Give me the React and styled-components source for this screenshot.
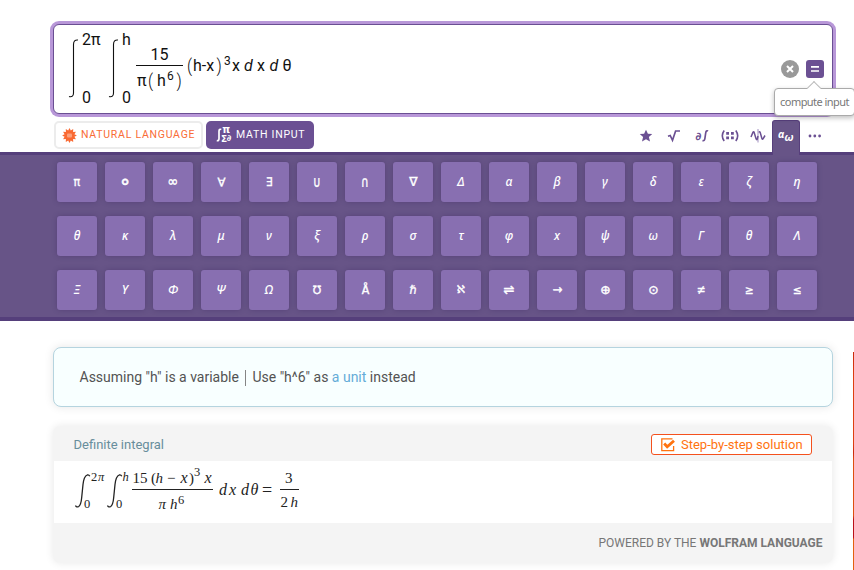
import React from "react";
import styled, { createGlobalStyle, css } from "styled-components";

const Global = createGlobalStyle`
  *, *::before, *::after { box-sizing: border-box; }
  body { margin: 0; background: #fff; font-family: Roboto, "Liberation Sans", sans-serif; }
`;

const Page = styled.main`
  display: grid;
  grid-template-columns: 853px 1px;
  width: 854px;
  height: 570px;
  overflow: hidden;
  background: #fff;
`;

const Column = styled.div`
  display: flex;
  flex-direction: column;
  width: 854px;
  padding-top: 24px;
`;

const EdgeBanner = styled.aside`
  height: 218px;
  margin-top: 352px;
  background: linear-gradient(#c9290c, #dd3f10 12%, #dd3f10 42%, #c9290c 46%, #dd4f10 50%, #dd4f10 75%, #b91018 77%, #b91018 85%, #e2600f 86%, #e2600f);
`;

const InputBox = styled.section`
  display: flex;
  justify-content: space-between;
  width: 780px;
  height: 90px;
  margin-left: 53px;
  flex: none;
  border: 1px solid #6a4f93;
  border-radius: 6px;
  box-shadow: 0 0 0 3px #b897d8;
  background: #fff;
`;

const Editor = styled.div`
  display: flex;
  align-items: flex-start;
  padding: 5px 0 0 14px;
  color: #111;
  font-size: 16px;
  line-height: 20px;
`;

const Integral = styled.div`
  display: flex;
  gap: 2px;
  width: ${(p) => p.$w}px;
`;

const Limits = styled.div`
  display: flex;
  flex-direction: column;
  justify-content: space-between;
  height: 78px;
`;

const Fraction = styled.div`
  display: flex;
  flex-direction: column;
  width: 47px;
  margin: 15px 4px 0 0;
`;

const Numerator = styled.div`
  height: 21px;
  border-bottom: 1px solid #111;
  text-align: center;
`;

const Denominator = styled.div`
  display: flex;
  padding: 5px 0 0 1px;
`;

const Terms = styled.div`
  display: flex;
  margin-top: 26px;
`;

const Term = styled.span`
  width: ${(p) => p.$w}px;
  flex: none;
  white-space: pre;
  ${(p) => p.$italic && css`font-style: italic;`}
  ${(p) => p.$sup && css`font-size: 12px; transform: translateY(-5px);`}
  ${(p) => p.$tall && css`transform: scaleY(1.1); font-weight: 300;`}
`;

const Actions = styled.div`
  position: relative;
  display: flex;
  align-items: center;
  gap: 7px;
  height: 20px;
  margin: 34px 8px 0 0;
`;

const Action = styled.button`
  display: grid;
  place-items: center;
  width: 18px;
  height: 18px;
  padding: 0;
  border: 0;
  border-radius: ${(p) => (p.$round ? "50%" : "3px")};
  background: ${(p) => (p.$round ? "#999" : "#6b5093")};
`;

const Tooltip = styled.div`
  position: absolute;
  top: 29px;
  left: -7px;
  z-index: 3;
  width: 81px;
  height: 28px;
  border: 1px solid #aaa;
  border-radius: 4px;
  background: #fff;
  box-shadow: 0 2px 5px rgba(0, 0, 0, 0.25);
  color: #777;
  font-family: "Noto Sans", sans-serif;
  font-size: 11px;
  letter-spacing: -0.55px;
  line-height: 26px;
  text-align: center;
  white-space: nowrap;

  &::before {
    content: "";
    position: absolute;
    top: -6px;
    left: 34px;
    width: 10px;
    height: 10px;
    border: solid #bbb;
    border-width: 1px 0 0 1px;
    background: #fff;
    transform: rotate(45deg);
  }
`;

const ModeBar = styled.nav`
  display: flex;
  height: 38px;
  padding: 7px 26px 0 54px;
  flex: none;
`;

const Mode = styled.button`
  display: flex;
  align-items: center;
  width: ${(p) => p.$w}px;
  height: 28px;
  margin-right: 3px;
  padding: 0 0 2px;
  padding-left: ${(p) => (p.$active ? 10 : 6)}px;
  gap: ${(p) => (p.$active ? 3 : 4)}px;
  border: ${(p) => (p.$active ? "0" : "2px solid #ececec")};
  border-radius: 5px;
  background: ${(p) => (p.$active ? "#6b5093" : "#fff")};
  color: ${(p) => (p.$active ? "#fff" : "#f96c35")};
  font-family: Roboto, sans-serif;
  font-size: 10.5px;
  letter-spacing: 0.75px;
  white-space: nowrap;

  svg { flex: none; overflow: visible; transform: translateY(1px); }
`;

const Categories = styled.div`
  display: flex;
  margin-left: auto;
`;

const Category = styled.button`
  display: grid;
  place-items: center;
  width: 28px;
  height: ${(p) => (p.$active ? 35 : 31)}px;
  margin-top: -1px;
  padding: ${(p) => (p.$active ? "0 0 3px" : "1px 0 0")};
  border: 0;
  ${(p) =>
    p.$active &&
    css`
      position: relative;
      z-index: 1;
      border: 1px solid #573f7c;
      border-bottom: 0;
      border-radius: 3px 3px 0 0;
    `}
  background: ${(p) => (p.$active ? "#675487" : "transparent")};
`;

const Keyboard = styled.section`
  height: 169px;
  flex: none;
  padding: 7px 0 0 57px;
  border-top: 3px solid #553f7b;
  border-bottom: 4px solid #553f7b;
  background: #675487;
`;

const KeyGrid = styled.div`
  display: grid;
  grid-template-columns: repeat(16, 40px);
  grid-auto-rows: 40px;
  gap: 14px 8px;
`;

const Key = styled.button`
  display: grid;
  place-items: center;
  padding: 0 0 1px;
  border: 0;
  border-radius: 3px;
  background: #886fb1;
  box-shadow: 0 0 5px rgba(60, 40, 95, 0.4);
  color: #fff;
  font-family: ${(p) => (p.$upright ? '"DejaVu Sans"' : '"Noto Sans"')}, "DejaVu Sans", sans-serif;
  font-size: ${(p) => (p.$upright ? 13 : 12)}px;
  font-weight: 500;
  font-style: ${(p) => (p.$upright ? "normal" : "italic")};
  line-height: 20px;
  -webkit-text-stroke: ${(p) => (p.$upright ? 0.4 : 0)}px #fff;
`;

const KeyLabel = styled.span`
  transform: scale(${(p) => p.$sx}, ${(p) => p.$sy});
`;

const Assumption = styled.section`
  width: 780px;
  height: 60px;
  flex: none;
  margin: 26px 0 0 53px;
  padding-left: 25.5px;
  border: 1px solid #b5d4df;
  border-radius: 8px;
  background: #f8ffff;
  box-shadow: 0 0 10px rgba(0, 0, 0, 0.1);
  color: #535353;
  font-size: 14px;
  line-height: 59px;
  white-space: pre;
`;

const Unit = styled.a`
  color: #65acd8;
`;

const Divider = styled.span`
  display: inline-block;
  width: 1px;
  height: 16px;
  margin: 0 6px 0 6.5px;
  background: #858585;
  vertical-align: -4px;
`;

const Pod = styled.section`
  width: 780px;
  height: 137px;
  flex: none;
  margin: 19px 0 0 53px;
  padding: 0 1px;
  border-radius: 7px;
  background: #f4f4f4;
  box-shadow: 0 0 9px rgba(0, 0, 0, 0.09);
`;

const PodHeader = styled.header`
  display: flex;
  justify-content: space-between;
  height: 35px;
  padding: 8px 20px 0 19.5px;
`;

const PodTitle = styled.h2`
  margin: 0;
  color: #688e9c;
  font-size: 13px;
  font-weight: 400;
  line-height: 21px;
`;

const StepButton = styled.button`
  display: flex;
  align-items: center;
  gap: 5px;
  width: 161px;
  height: 21px;
  padding: 0 0 0 8px;
  border: 1px solid #f4511e;
  border-radius: 3px;
  background: #fff;
  color: #ff7310;
  font-family: Roboto, sans-serif;
  font-size: 13px;
  white-space: nowrap;
`;

const PodBody = styled.div`
  height: 62px;
  background: #fff;

  svg { display: block; }
`;

const PodFooter = styled.footer`
  padding-right: 9.5px;
  color: #777;
  font-size: 12px;
  line-height: 40px;
  text-align: right;
`;

const EditorIntegral = () => (
  <svg width="12" height="78" viewBox="0 0 12 78" fill="none" stroke="#111" strokeWidth="1.1">
    <path d="M1 66.500q4.500 1 4.500-3.500V14.500q0-5 4.500-4.500" />
  </svg>
);

const Spikey = () => {
  const points = Array.from({ length: 24 }, (_, i) => {
    const r = i % 2 ? 5.1 : 7.4;
    const a = (i * Math.PI) / 12;
    return `${(7.5 + r * Math.sin(a)).toFixed(2)},${(7.5 - r * Math.cos(a)).toFixed(2)}`;
  }).join(" ");
  return (
    <svg width="15" height="15" viewBox="0 0 15 15">
      <polygon points={points} fill="#f96932" />
      <rect x="5" y="5.500" width="5" height="4" rx="1" fill="#fba07c" />
    </svg>
  );
};

const MathGlyphs = () => (
  <svg width="17" height="18" viewBox="0 0 17 18" fill="#fff" fontFamily="DejaVu Sans" fontWeight="700">
    <path d="M.8 14.500q2.200.8 2.200-2V5.500q0-3 2.300-2" fill="none" stroke="#fff" strokeWidth="1.700" />
    <text x="6.300" y="7" fontSize="10">π</text>
    <text x="5" y="16" fontSize="9">Σ</text>
    <text x="10.800" y="15" fontSize="8.500">∂</text>
  </svg>
);

const icons = {
  star: <path d="M10 3.800l1.900 4 4.300.3-3.300 2.900 1.100 4.600L10 13.200l-4 2.400 1.100-4.600L3.800 8.100l4.300-.3z" fill="#6b5093" />,
  root: <path d="M4 10.300l2.200-.8 2.300 4.800L11.600 5H16" fill="none" stroke="#6b5093" strokeWidth="1.700" />,
  calculus: (
    <g fill="#6b5093">
      <text x="3.500" y="14" fontFamily="DejaVu Sans" fontSize="11" fontWeight="700" fontStyle="italic">∂</text>
      <path d="M10.500 14.500q2 .8 2.400-2l.8-5.500q.4-3 2.400-2" fill="none" stroke="#6b5093" strokeWidth="1.700" />
    </g>
  ),
  matrix: (
    <g fill="#6b5093">
      <path d="M4.200 4.500q-3.800 5.300 0 10.500M15.800 4.500q3.800 5.300 0 10.500" fill="none" stroke="#6b5093" strokeWidth="1.600" />
      <path d="M6.200 6h2.800v2.800H6.200zM11 6h2.800v2.800H11zM6.200 10.500h2.800v2.800H6.200zM11 10.500h2.800v2.800H11z" />
    </g>
  ),
  wave: (
    <g fill="none" stroke="#6b5093">
      <path d="M10 3v13.500" stroke="#a08fc0" strokeWidth="1" />
      <path d="M3 11l2-4.800q.6-1 1.100 0l2 6.800q.7 1.400 1.200 0L10 10M11 6.500q.6-1.400 1.200 0l1.700 6q.6 1.500 1.300 0L17 9.500" strokeWidth="1.500" />
    </g>
  ),
  greek: (
    <g fill="#fff" fontFamily="Noto Sans" fontWeight="700" fontStyle="italic">
      <text x="2" y="11" fontSize="10.500">α</text>
      <text x="8.300" y="14" fontSize="11">ω</text>
    </g>
  ),
  more: (
    <g fill="#6b5093">
      <circle cx="6" cy="10" r="1.400" />
      <circle cx="10.800" cy="10" r="1.400" />
      <circle cx="15.600" cy="10" r="1.400" />
    </g>
  ),
};

const upright = new Set([..."∘∞∀∃∪∩∇ℵ⇌→⊕⊙≥≤", "\u2260"]);
const plain = new Set(["π", "\u00c5", "ℏ", "℧"]);
const scales = {
  "∘": [1.5, 1.5],
  "∞": [1, 1.05],
  "∀": [0.9, 0.9],
  "∃": [0.8, 0.9],
  "∪": [0.8, 1.15],
  "∩": [0.8, 1.15],
  "∇": [0.95, 0.95],
  "ℵ": [0.85, 0.85],
  "→": [0.9, 1],
  "⊙": [0.95, 0.95],
  "⊕": [0.95, 0.95],
  "≥": [0.8, 0.9],
  "≤": [0.8, 0.9],
  "\u2260": [0.8, 1],
};
const keys = [
  ..."π∘∞∀∃∪∩∇Δαβγδεζη",
  ..."θκλμνξρστφxψωΓθΛ",
  ..."ΞΥΦΨΩ℧", "\u00c5", ..."ℏℵ⇌→⊕⊙", "\u2260", "≥", "≤",
];

const ResultFormula = () => (
  <svg width="260" height="62" viewBox="54 461 260 62" fill="#222" fontFamily="Liberation Serif, serif" fontSize="15">
    <g fill="none" stroke="#222" strokeWidth="1.300">
      <path d="M75.500 505.500q1 2.300 3.200 1 2.300-1.500 3-9l1.300-13q1-8.500 4.200-9.500 1.800-.4 2.600 1.200" />
      <path d="M107.500 505.500q1 2.300 3.200 1 2.300-1.500 3-9l1.300-13q1-8.500 4.200-9.500 1.800-.4 2.600 1.200" />
      <path d="M132 489.500h81M280 489.500h19" strokeWidth="1" />
    </g>
    <g fontSize="12.500">
      <text x="91" y="481">2</text>
      <text x="98" y="481" fontStyle="italic">π</text>
      <text x="84" y="508">0</text>
      <text x="122.500" y="481" fontStyle="italic">h</text>
      <text x="116" y="508">0</text>
      <text x="194" y="476">3</text>
      <text x="178" y="504">6</text>
    </g>
    <text x="132.500 140" y="482.500">15</text>
    <text x="151" y="482.500">(</text>
    <text x="155.500" y="482.500" fontStyle="italic">h</text>
    <text x="167" y="482.500">−</text>
    <text x="180.500" y="482.500" fontStyle="italic" fontSize="16">x</text>
    <text x="189" y="482.500">)</text>
    <text x="204.500" y="482.500" fontStyle="italic" fontSize="16">x</text>
    <text x="158.500 170" y="508.500" fontStyle="italic">πh</text>
    <text x="219 229 241 250.500" y="494.500" fontStyle="italic" fontSize="16">dxdθ</text>
    <text x="262" y="496" fontSize="18">=</text>
    <text x="285" y="482.500">3</text>
    <text x="280.500" y="507">2</text>
    <text x="290.500" y="507" fontStyle="italic">h</text>
  </svg>
);

export default function App() {
  return (
    <>
      <Global />
      <Page>
        <Column>
          <InputBox>
            <Editor>
              <Integral $w={40}>
                <EditorIntegral />
                <Limits><span>2π</span><span>0</span></Limits>
              </Integral>
              <Integral $w={28}>
                <EditorIntegral />
                <Limits><span>h</span><span>0</span></Limits>
              </Integral>
              <Fraction>
                <Numerator>15</Numerator>
                <Denominator>
                  <Term $w={11}>π</Term>
                  <Term $w={9} $tall>(</Term>
                  <Term $w={10}>h</Term>
                  <Term $w={9.5} $sup>6</Term>
                  <Term $w={6} $tall>)</Term>
                </Denominator>
              </Fraction>
              <Terms>
                <Term $w={6} $tall>(</Term>
                <Term $w={23.5}>h-x</Term>
                <Term $w={7.5} $tall>)</Term>
                <Term $w={8} $sup>3</Term>
                <Term $w={12}>x</Term>
                <Term $w={13} $italic>d</Term>
                <Term $w={12.5}>x</Term>
                <Term $w={13} $italic>d</Term>
                <Term $w={9}>θ</Term>
              </Terms>
            </Editor>
            <Actions>
              <Action $round aria-label="clear">
                <svg width="10" height="10" stroke="#fff" strokeWidth="2"><path d="M2 2l6 6M8 2l-6 6" /></svg>
              </Action>
              <Action aria-label="compute">
                <svg width="10" height="10" stroke="#fff" strokeWidth="1.600"><path d="M1 2.900h8M1 7h8" /></svg>
              </Action>
              <Tooltip>compute input</Tooltip>
            </Actions>
          </InputBox>

          <ModeBar>
            <Mode $w={149}><Spikey />NATURAL LANGUAGE</Mode>
            <Mode $w={108} $active><MathGlyphs />MATH INPUT</Mode>
            <Categories>
              {Object.entries(icons).map(([name, icon]) => (
                <Category key={name} $active={name === "greek"} aria-label={name}>
                  <svg width="20" height="20" viewBox="0 0 20 20">{icon}</svg>
                </Category>
              ))}
            </Categories>
          </ModeBar>

          <Keyboard>
            <KeyGrid>
              {keys.map((k, i) => {
                const [sx, sy] = scales[k] || [1, 1];
                return (
                  <Key key={i} $upright={upright.has(k) || plain.has(k)}>
                    <KeyLabel $sx={plain.has(k) ? 0.85 : sx} $sy={plain.has(k) ? 0.9 : sy}>{k}</KeyLabel>
                  </Key>
                );
              })}
            </KeyGrid>
          </Keyboard>

          <Assumption>
            Assuming "h" is a variable<Divider />Use "h^6" as <Unit>a unit</Unit> instead
          </Assumption>

          <Pod>
            <PodHeader>
              <PodTitle>Definite integral</PodTitle>
              <StepButton>
                <svg width="16" height="16" viewBox="0 0 16 16" fill="none" stroke="#ff7310">
                  <path d="M12.500 1.800H1.800v11.800h11.800V9" strokeWidth="1.300" />
                  <path d="M4.200 6.500l3 3.300 6.800-6" strokeWidth="2.800" />
                </svg>
                Step-by-step solution
              </StepButton>
            </PodHeader>
            <PodBody><ResultFormula /></PodBody>
            <PodFooter>POWERED BY THE <b>WOLFRAM LANGUAGE</b></PodFooter>
          </Pod>
        </Column>
        <EdgeBanner />
      </Page>
    </>
  );
}
